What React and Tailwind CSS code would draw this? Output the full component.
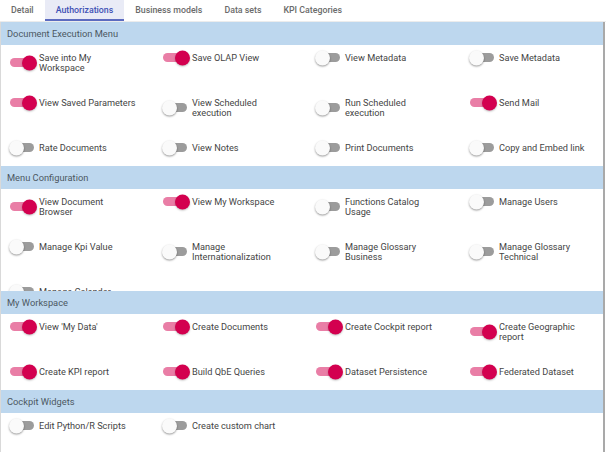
import React from 'react';

const tabs = ['Detail', 'Authorizations', 'Business models', 'Data sets', 'KPI Categories'];

const sections = [
  {
    title: 'Document Execution Menu',
    items: [
      { label: ['Save into My', 'Workspace'], on: true },
      { label: ['Save OLAP View'], on: true },
      { label: ['View Metadata'], on: false },
      { label: ['Save Metadata'], on: false },
      { label: ['View Saved Parameters'], on: true },
      { label: ['View Scheduled', 'execution'], on: false },
      { label: ['Run Scheduled', 'execution'], on: false },
      { label: ['Send Mail'], on: true },
      { label: ['Rate Documents'], on: false },
      { label: ['View Notes'], on: false },
      { label: ['Print Documents'], on: false },
      { label: ['Copy and Embed link'], on: false },
    ],
  },
  {
    title: 'Menu Configuration',
    clipped: true,
    items: [
      { label: ['View Document', 'Browser'], on: true },
      { label: ['View My Workspace'], on: true },
      { label: ['Functions Catalog', 'Usage'], on: false },
      { label: ['Manage Users'], on: false },
      { label: ['Manage Kpi Value'], on: false },
      { label: ['Manage', 'Internationalization'], on: false },
      { label: ['Manage Glossary', 'Business'], on: false },
      { label: ['Manage Glossary', 'Technical'], on: false },
      { label: ['Manage Calendar'], on: false },
    ],
  },
  {
    title: 'My Workspace',
    items: [
      { label: ["View 'My Data'"], on: true },
      { label: ['Create Documents'], on: true },
      { label: ['Create Cockpit report'], on: true },
      { label: ['Create Geographic', 'report'], on: true },
      { label: ['Create KPI report'], on: true },
      { label: ['Build QbE Queries'], on: true },
      { label: ['Dataset Persistence'], on: true },
      { label: ['Federated Dataset'], on: true },
    ],
  },
  {
    title: 'Cockpit Widgets',
    items: [
      { label: ['Edit Python/R Scripts'], on: false },
      { label: ['Create custom chart'], on: false },
    ],
  },
];

function Toggle({ on }) {
  return (
    <span
      className={`relative inline-block w-[24px] h-[9px] shrink-0 rounded-full ${
        on ? 'bg-[#e97ea6]' : 'bg-[#9c9c9c]'
      }`}
    >
      <span
        className={`absolute top-1/2 -translate-y-1/2 w-[15px] h-[15px] rounded-full ${
          on
            ? 'left-[12px] bg-[#d3004f] shadow-[0_1px_2px_rgba(0,0,0,0.25)]'
            : 'left-[-1px] bg-[#fafafa] shadow-[0_1px_2px_rgba(0,0,0,0.4)]'
        }`}
      />
    </span>
  );
}

function Item({ label, on }) {
  return (
    <div className="flex items-center self-start">
      <Toggle on={on} />
      <div className="ml-[5px] text-[9.2px] leading-[9.5px] text-[#454545] whitespace-nowrap">
        {label.map((line) => (
          <div key={line}>{line}</div>
        ))}
      </div>
    </div>
  );
}

export default function App() {
  return (
    <div className="w-[606px] bg-white" style={{ fontFamily: 'Roboto, "Liberation Sans", sans-serif' }}>
      {/* Tabs */}
      <div className="flex h-[22px] border-b border-[#ececec]">
        {tabs.map((tab) => {
          const active = tab === 'Authorizations';
          return (
            <div
              key={tab}
              className={`flex items-center px-[11px] h-[21px] text-[8.8px] font-medium ${
                active
                  ? 'bg-[#e9ebf6] text-[#3f51b5] border-b-2 border-[#5c6bc0] pt-[2px]'
                  : 'text-[#6b6b6b]'
              }`}
            >
              {tab}
            </div>
          );
        })}
      </div>

      {/* Sections */}
      <div className="w-[605px] border-l border-[#d9d9d9] border-r-2 border-r-[#a9a9a9]">
        {sections.map((section) => (
          <div key={section.title}>
            <div className="h-[23px] flex items-center pl-[6px] bg-[#bdd7ee] text-[9.3px] text-[#4c5862]">
              {section.title}
            </div>
            <div className={section.clipped ? 'h-[102px] overflow-hidden' : ''}>
              <div className="grid grid-cols-[153px_153px_154px_1fr] auto-rows-[23px] gap-y-[22px] pl-[9px] pt-[8px]">
                {section.items.map((item) => (
                  <Item key={item.label.join(' ')} label={item.label} on={item.on} />
                ))}
              </div>
            </div>
          </div>
        ))}
        <div className="h-[30px]" />
      </div>
    </div>
  );
}
